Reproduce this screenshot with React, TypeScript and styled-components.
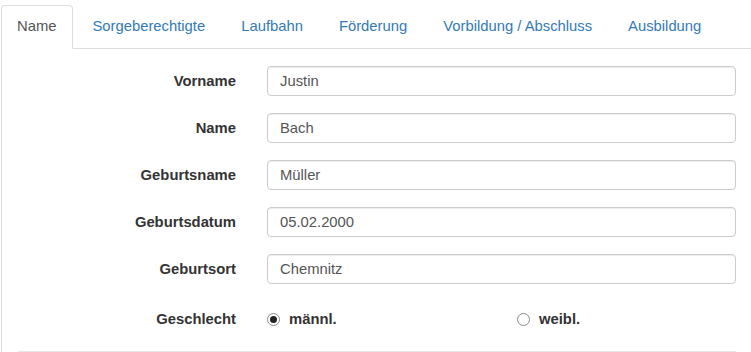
import React from 'react';
import styled, { createGlobalStyle } from 'styled-components';

const GlobalStyle = createGlobalStyle`
  body {
    margin: 0;
    background: #fff;
    font-family: 'Liberation Sans', Arial, Helvetica, sans-serif;
    font-size: 14.8px;
    color: #333;
  }
`;

const tabs = ['Name', 'Sorgeberechtigte', 'Laufbahn', 'Förderung', 'Vorbildung / Abschluss', 'Ausbildung'];

const fields = [
  { label: 'Vorname', value: 'Justin' },
  { label: 'Name', value: 'Bach' },
  { label: 'Geburtsname', value: 'Müller' },
  { label: 'Geburtsdatum', value: '05.02.2000' },
  { label: 'Geburtsort', value: 'Chemnitz' },
];

export default function App() {
  return (
    <>
      <GlobalStyle />
      <Page>
        <TabList>
          {tabs.map((t, i) => (
            <Tab key={t} $active={i === 0}>
              {t}
            </Tab>
          ))}
        </TabList>
        <Panel>
          <Form>
            {fields.map((f) => (
              <React.Fragment key={f.label}>
                <Label>{f.label}</Label>
                <Input defaultValue={f.value} />
              </React.Fragment>
            ))}
            <Label $offset={3}>Geschlecht</Label>
            <RadioGroup>
              <RadioOption>
                <RadioDot $checked />
                männl.
              </RadioOption>
              <RadioOption>
                <RadioDot />
                weibl.
              </RadioOption>
            </RadioGroup>
          </Form>
          <Divider />
        </Panel>
      </Page>
    </>
  );
}

const Page = styled.div`
  padding-top: 5px;
  margin-left: 1px;
`;

const TabList = styled.ul`
  display: flex;
  list-style: none;
  margin: 0;
  padding: 0;
  border-bottom: 1px solid #ddd;
`;

const Tab = styled.li<{ $active?: boolean }>`
  padding: 10px 16px 12px;
  line-height: 20px;
  margin-right: 2px;
  margin-bottom: -1px;
  border: 1px solid transparent;
  border-radius: 4px 4px 0 0;
  color: #337ab7;
  cursor: pointer;
  &:first-child {
    padding-left: 15px;
  }
  ${(p) =>
    p.$active &&
    `
    color: #555;
    background: #fff;
    border-color: #ddd #ddd transparent;
  `}
`;

const Panel = styled.div`
  border-left: 1px solid #ddd;
  padding-top: 17px;
  height: 303px;
  box-sizing: border-box;
`;

const Form = styled.div`
  display: grid;
  grid-template-columns: 234px 1fr;
  column-gap: 31px;
  row-gap: 17px;
  padding-right: 15px;
`;

const Label = styled.label<{ $offset?: number }>`
  text-align: right;
  font-weight: bold;
  line-height: 30px;
  padding-top: ${(p) => p.$offset ?? 0}px;
  color: #333;
`;

const Input = styled.input`
  height: 30px;
  box-sizing: border-box;
  padding: 0 12px;
  border: 1px solid #ccc;
  border-radius: 4px;
  box-shadow: inset 0 1px 1px rgba(0, 0, 0, 0.075);
  font-family: 'Liberation Sans', Arial, sans-serif;
  font-size: 14.8px;
  color: #555;
  outline: none;
`;

const RadioGroup = styled.div`
  display: grid;
  grid-template-columns: 250px 1fr;
  padding: 8px 0 7px;
  line-height: 20px;
`;

const RadioOption = styled.span`
  display: flex;
  align-items: center;
  gap: 9px;
  font-weight: bold;
  color: #333;
`;

const RadioDot = styled.span<{ $checked?: boolean }>`
  width: 13px;
  height: 13px;
  box-sizing: border-box;
  border: 1px solid #8a8a8a;
  border-radius: 50%;
  background: #fff;
  display: flex;
  align-items: center;
  justify-content: center;
  &::after {
    content: '';
    width: 7px;
    height: 7px;
    border-radius: 50%;
    background: ${(p) => (p.$checked ? '#222' : 'transparent')};
  }
`;

const Divider = styled.hr`
  margin: 15px 15px 0 16px;
  border: 0;
  border-top: 1px solid #e8e8e8;
`;
